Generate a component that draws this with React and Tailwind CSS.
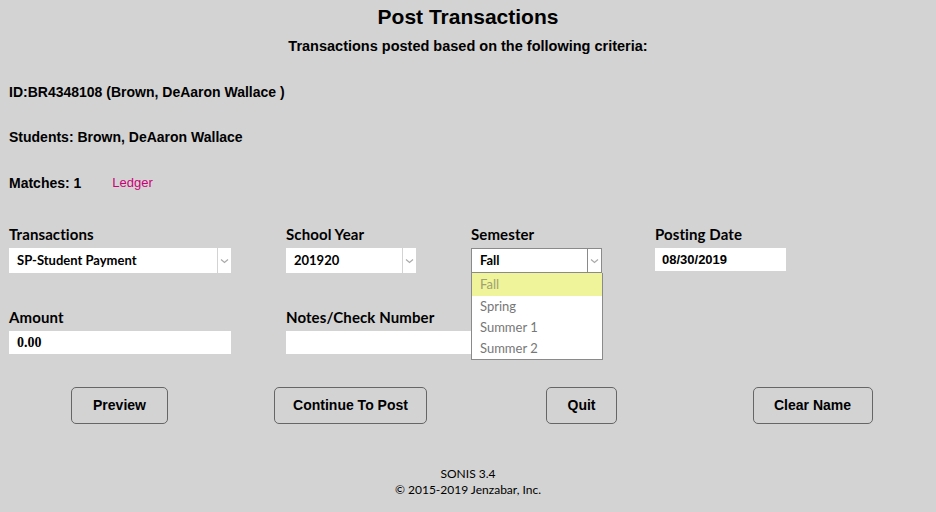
import React from 'react';

const gothic = { fontFamily: '"Century Gothic", Lato, "DejaVu Sans", sans-serif' };
const narrow = { fontFamily: '"Liberation Sans Narrow", "Liberation Sans", Arial, sans-serif' };

const Chevron = () => (
  <svg width="9" height="6" viewBox="0 0 9 6" className="text-[#aaa]">
    <path d="M1 1.5 L4.5 4.5 L8 1.5" fill="none" stroke="currentColor" strokeWidth="1.2" />
  </svg>
);

const SelectBox = ({ value, width, open }) => (
  <div
    className={`flex h-[25px] bg-white ${open ? 'border border-[#8a8a8a]' : ''}`}
    style={{ width }}
  >
    <div className="flex-1 flex items-center pl-[8px] text-[13px] font-bold text-black">{value}</div>
    <div className={`w-[14px] flex items-center justify-center border-l ${open ? 'border-[#8a8a8a]' : 'border-[#d3d3d3]'}`}>
      <Chevron />
    </div>
  </div>
);

const Label = ({ children }) => (
  <div className="text-[15px] font-bold text-black leading-none h-[14px] mb-[7px] tracking-[0.1px]">{children}</div>
);

const Button = ({ children, width }) => (
  <button
    className="h-[37px] rounded-[5px] border border-[#666] bg-[#d3d3d3] text-[14px] font-bold text-black"
    style={{ width, ...narrow }}
  >
    {children}
  </button>
);

export default function App() {
  const semesters = ['Fall', 'Spring', 'Summer 1', 'Summer 2'];
  return (
    <div className="w-[936px] h-[512px] bg-[#d3d3d3] text-black overflow-hidden" style={gothic}>
      {/* Heading */}
      <div className="pt-[5px] text-center" style={narrow}>
        <h1 className="text-[21px] font-bold leading-[24px]">Post Transactions</h1>
        <p className="mt-[9px] text-[14.5px] font-bold leading-[16px]">Transactions posted based on the following criteria:</p>
      </div>

      {/* Criteria */}
      <div className="pl-[9px] text-[14px] font-bold" style={narrow}>
        <div className="mt-[30px] leading-[16px]">ID:BR4348108 (Brown, DeAaron Wallace )</div>
        <div className="mt-[29px] leading-[16px]">Students: Brown, DeAaron Wallace</div>
        <div className="mt-[30px] leading-[16px] flex items-center">
          <span>Matches: 1</span>
          <span className="ml-[31px] text-[13px] font-normal text-[#cc0077]">Ledger</span>
        </div>
      </div>

      {/* Form */}
      <div className="mt-[36px] pl-[9px] grid grid-cols-[277px_185px_184px_1fr]">
        <div>
          <Label>Transactions</Label>
          <SelectBox value="SP-Student Payment" width={222} />
        </div>
        <div>
          <Label>School Year</Label>
          <SelectBox value="201920" width={130} />
        </div>
        <div className="relative">
          <Label>Semester</Label>
          <SelectBox value="Fall" width={131} open />
          <div className="absolute left-0 top-[46px] w-[132px] bg-white border border-[#8a8a8a] border-t-0 z-10 text-[13px] text-[#777]">
            {semesters.map((s, i) => (
              <div
                key={s}
                className={`h-[21px] flex items-center pl-[8px] ${i === 0 ? 'bg-[#eff49b] text-[#a0a070] h-[23px]' : ''}`}
              >
                {s}
              </div>
            ))}
          </div>
        </div>
        <div>
          <Label>Posting Date</Label>
          <div
            className="w-[131px] h-[23px] bg-white flex items-center pl-[7px] text-[13px] font-bold"
            style={{ fontFamily: '"Liberation Sans", Arial, sans-serif' }}
          >
            08/30/2019
          </div>
        </div>

        <div className="mt-[37px]">
          <Label>Amount</Label>
          <div
            className="w-[222px] h-[23px] bg-white flex items-center pl-[8px] text-[14px] font-bold"
            style={{ fontFamily: '"Liberation Serif", "Times New Roman", serif' }}
          >
            0.00
          </div>
        </div>
        <div className="mt-[37px] col-span-2">
          <Label>Notes/Check Number</Label>
          <div className="w-[222px] h-[23px] bg-white" />
        </div>
      </div>

      {/* Buttons */}
      <div className="mt-[33px] px-[4px] grid grid-cols-[231px_231px_231px_231px]">
        <div className="flex justify-center"><Button width={97}>Preview</Button></div>
        <div className="flex justify-center"><Button width={153}>Continue To Post</Button></div>
        <div className="flex justify-center"><Button width={71}>Quit</Button></div>
        <div className="flex justify-center"><Button width={120}>Clear Name</Button></div>
      </div>

      {/* Footer */}
      <div className="mt-[42px] text-center text-[12px] leading-[16px] text-black">
        <div>SONIS 3.4</div>
        <div>© 2015-2019 Jenzabar, Inc.</div>
      </div>
    </div>
  );
}
